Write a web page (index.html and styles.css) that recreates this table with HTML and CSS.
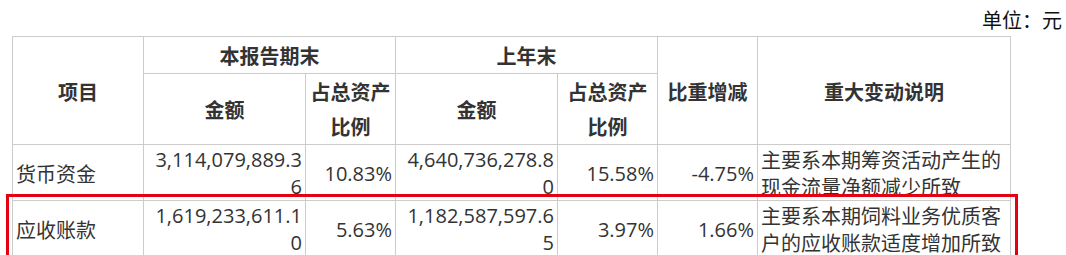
FILE: index.html
```html
<!DOCTYPE html>
<html lang="zh-CN">
<head>
<meta charset="utf-8">
<title>货币资金与应收账款</title>
<link rel="stylesheet" href="styles.css">
</head>
<body>
<div class="page">
  <div class="unit">单位：元</div>
  <div class="table-wrap">
    <table class="data">
      <colgroup>
        <col class="c1"><col class="c2"><col class="c3"><col class="c4"><col class="c5"><col class="c6"><col class="c7">
      </colgroup>
      <thead>
        <tr class="h1">
          <th rowspan="2">项目</th>
          <th colspan="2">本报告期末</th>
          <th colspan="2">上年末</th>
          <th rowspan="2">比重增减</th>
          <th rowspan="2">重大变动说明</th>
        </tr>
        <tr class="h2">
          <th>金额</th>
          <th>占总资产比例</th>
          <th>金额</th>
          <th>占总资产比例</th>
        </tr>
      </thead>
      <tbody>
        <tr>
          <td class="name">货币资金</td>
          <td class="num">3,114,079,889.36</td>
          <td class="num">10.83%</td>
          <td class="num">4,640,736,278.80</td>
          <td class="num">15.58%</td>
          <td class="num">-4.75%</td>
          <td class="desc">主要系本期筹资活动产生的现金流量净额减少所致</td>
        </tr>
        <tr>
          <td class="name">应收账款</td>
          <td class="num">1,619,233,611.10</td>
          <td class="num">5.63%</td>
          <td class="num">1,182,587,597.65</td>
          <td class="num">3.97%</td>
          <td class="num">1.66%</td>
          <td class="desc">主要系本期饲料业务优质客户的应收账款适度增加所致</td>
        </tr>
      </tbody>
    </table>
    <div class="highlight"></div>
  </div>
</div>
</body>
</html>
```
FILE: styles.css
```css
html, body {
  margin: 0;
  padding: 0;
  background: #ffffff;
}
.page {
  padding: 6px 4px 0 12px;
  font-family: "Noto Sans CJK SC", "Noto Sans", sans-serif;
  font-size: 20px;
  color: #333333;
}
.unit {
  text-align: right;
  line-height: 28px;
  height: 28px;
  margin-bottom: 2px;
  color: #111111;
}
.table-wrap {
  position: relative;
}
.data {
  border-collapse: collapse;
  table-layout: fixed;
  width: 998px;
}
.c1 { width: 131px; }
.c2 { width: 162px; }
.c3 { width: 90px; }
.c4 { width: 162px; }
.c5 { width: 100px; }
.c6 { width: 100px; }
.c7 { width: 253px; }
.data th,
.data td {
  border: 1px solid #cccccc;
}
.data th {
  font-weight: bold;
  line-height: 35px;
  padding: 0 2px;
  text-align: center;
  vertical-align: middle;
  color: #333333;
}
.h1 th {
  padding-top: 1px;
}
.data td {
  line-height: 27px;
  padding: 1px 2px 0 2px;
  vertical-align: middle;
  word-break: break-all;
}
.data td.name {
  padding-left: 3px;
}
.data td.num {
  font-family: "Open Sans", "Noto Sans CJK SC", sans-serif;
  font-size: 20px;
  text-align: right;
  padding-left: 6px;
  padding-right: 3px;
}
.data td.desc {
  padding-left: 3px;
}
.highlight {
  position: absolute;
  left: -6px;
  top: 158px;
  width: 1006px;
  height: 58px;
  border: 3px solid #e50012;
}
```
